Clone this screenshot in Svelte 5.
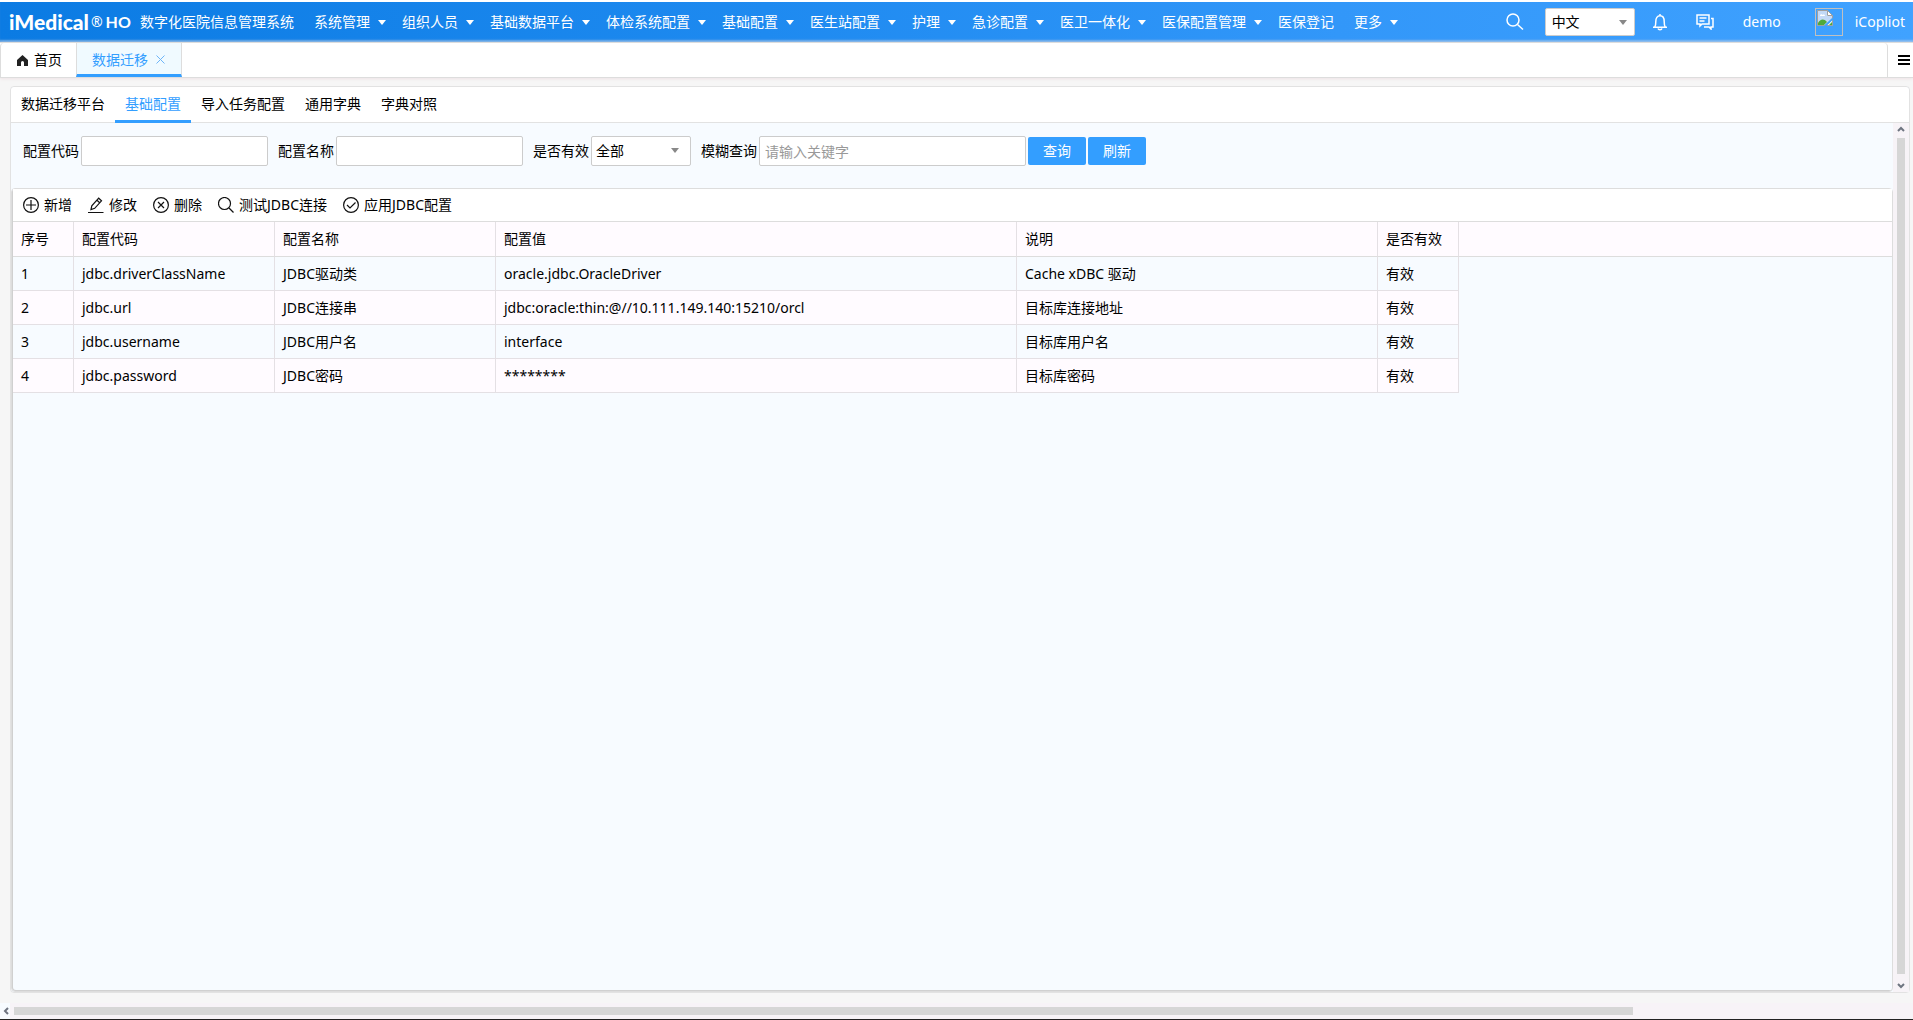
<script>
  const menus = [
    { label: '系统管理', children: true },
    { label: '组织人员', children: true },
    { label: '基础数据平台', children: true },
    { label: '体检系统配置', children: true },
    { label: '基础配置', children: true },
    { label: '医生站配置', children: true },
    { label: '护理', children: true },
    { label: '急诊配置', children: true },
    { label: '医卫一体化', children: true },
    { label: '医保配置管理', children: true },
    { label: '医保登记', children: false },
    { label: '更多', children: true }
  ];

  const tabs = ['数据迁移平台', '基础配置', '导入任务配置', '通用字典', '字典对照'];

  const tools = [
    { icon: 'add', label: '新增' },
    { icon: 'edit', label: '修改' },
    { icon: 'remove', label: '删除' },
    { icon: 'search', label: '测试JDBC连接' },
    { icon: 'apply', label: '应用JDBC配置' }
  ];

  const columns = ['序号', '配置代码', '配置名称', '配置值', '说明', '是否有效'];

  const allRows = [
    { code: 'jdbc.driverClassName', name: 'JDBC驱动类', value: 'oracle.jdbc.OracleDriver', desc: 'Cache xDBC 驱动', active: '有效' },
    { code: 'jdbc.url', name: 'JDBC连接串', value: 'jdbc:oracle:thin:@//10.111.149.140:15210/orcl', desc: '目标库连接地址', active: '有效' },
    { code: 'jdbc.username', name: 'JDBC用户名', value: 'interface', desc: '目标库用户名', active: '有效' },
    { code: 'jdbc.password', name: 'JDBC密码', value: '********', desc: '目标库密码', active: '有效' }
  ];

  let activeTab = $state('基础配置');
  let code = $state('');
  let name = $state('');
  let status = $state('全部');
  let keyword = $state('');
  let rows = $state(allRows);

  function query() {
    rows = allRows.filter(
      (r) =>
        r.code.includes(code) &&
        r.name.includes(name) &&
        (status === '全部' || r.active === status) &&
        Object.values(r).join(' ').includes(keyword)
    );
  }

  function refresh() {
    code = '';
    name = '';
    status = '全部';
    keyword = '';
    rows = allRows;
  }
</script>

<div class="page">
  <header>
    <div class="logo">iMedical<sup>®</sup><b>HO</b></div>
    <span class="system">数字化医院信息管理系统</span>
    <nav>
      {#each menus as menu}
        <a href="#menu" class:plain={!menu.children}>
          {menu.label}
          {#if menu.children}<i class="caret"></i>{/if}
        </a>
      {/each}
    </nav>
    <div class="user">
      <button class="search" aria-label="搜索">
        <svg width="18" height="18" viewBox="0 0 18 18">
          <circle cx="7" cy="7" r="6" />
          <path d="M11.5 11.5 17 16.5" />
        </svg>
      </button>
      <div class="select lang">
        <select aria-label="语言">
          <option>中文</option>
        </select>
      </div>
      <button class="bell" aria-label="通知">
        <svg width="16" height="18" viewBox="0 0 16 18">
          <path d="M1 14.200h14M2.800 14c.9-1.300 1-3.200 1-5.500C3.800 5 5.300 2.800 8 2.800s4.200 2.200 4.200 5.700c0 2.300.1 4.200 1 5.500M8 1v1.500M6 15.500c.5 1.700 3.500 1.700 4 0" />
        </svg>
      </button>
      <button class="chat" aria-label="消息">
        <svg width="18" height="16" viewBox="0 0 18 16">
          <path d="M1 1h12v9H6l-2 2v-2H1zM3.500 4h7M3.500 7h5M15 4.500h2V13h-2v2l-2-2H8" />
        </svg>
      </button>
      <span class="account">demo</span>
      <span class="avatar">
        <svg width="16" height="16" viewBox="0 0 16 16">
          <path d="M.5.5h10l5 5v10H.5z" fill="#fff" stroke="#a0a0a0" />
          <path d="M1 1h9v5h5v4L10 15H1z" fill="#c3d9f7" />
          <path d="M3 6c0-2 2-2 2.500-1C7 4 8 5 8 6z" fill="#fff" />
          <path d="M1 15v-2c2-4 6-5 9-1l-3 3z" fill="#4faa3c" />
          <path d="M12 15l3-3v3z" fill="#4faa3c" />
          <path d="M10.500.5v5h5z" fill="#fff" stroke="#a0a0a0" />
          <path d="M8 16 16 8.500" stroke="#40a2ff" stroke-width="2" />
        </svg>
      </span>
      <a href="#copilot">iCopliot</a>
    </div>
  </header>

  <div class="pages">
    <button class="home">
      <svg width="11" height="11" viewBox="0 0 11 11">
        <path d="M5.500 0 11 5v6H7V7.500a1.500 1.500 0 0 0-3 0V11H0V5z" fill="#222" />
      </svg>
      首页
    </button>
    <button class="current">
      数据迁移
      <svg width="9" height="9" viewBox="0 0 9 9"><path d="M.5.5l8 8M8.500.5l-8 8" stroke="#6db5f8" /></svg>
    </button>
    <span class="rest"></span>
    <button class="more" aria-label="页签菜单">
      <svg width="12" height="10" viewBox="0 0 12 10"><path d="M0 1h12M0 5h12M0 9h12" stroke="#000" stroke-width="2" /></svg>
    </button>
  </div>

  <main>
    <div class="tabs">
      {#each tabs as tab}
        <button class:active={tab === activeTab} onclick={() => (activeTab = tab)}>{tab}</button>
      {/each}
    </div>

    <div class="body">
      <div class="content">
        <div class="filters">
          <label for="code">配置代码</label>
          <input id="code" type="text" bind:value={code} />
          <label for="name">配置名称</label>
          <input id="name" type="text" bind:value={name} />
          <label for="status">是否有效</label>
          <div class="select status">
            <select id="status" bind:value={status}>
              <option>全部</option>
              <option>有效</option>
              <option>无效</option>
            </select>
          </div>
          <label for="keyword">模糊查询</label>
          <input id="keyword" class="wide" type="text" placeholder="请输入关键字" bind:value={keyword} />
          <button onclick={query}>查询</button>
          <button onclick={refresh}>刷新</button>
        </div>

        <section class="grid">
          <div class="toolbar">
            {#each tools as tool}
              <button>
                <svg width="16" height="16" viewBox="0 0 16 16">
                  {#if tool.icon === 'edit'}
                    <path d="M3 12.500 3.800 8.800 10.700 1.200 13.500 3.800 6.700 11.300zM9 3.200l2.700 2.500M0 15.500h15.500" />
                  {:else if tool.icon === 'search'}
                    <circle cx="6.500" cy="6.500" r="6" />
                    <path d="M11 11l4.500 4.500" />
                  {:else}
                    <circle cx="8" cy="8" r="7.400" />
                    {#if tool.icon === 'add'}<path d="M8 3v10M3 8h10" />{/if}
                    {#if tool.icon === 'remove'}<path d="M5 5l6 6M11 5l-6 6" />{/if}
                    {#if tool.icon === 'apply'}<path d="M4 8l3 3 5.500-5.500" />{/if}
                  {/if}
                </svg>
                {tool.label}
              </button>
            {/each}
          </div>
          <div class="head">
            <table>
              <colgroup>
                <col class="c1" /><col class="c2" /><col class="c3" /><col class="c4" /><col class="c5" /><col class="c6" />
              </colgroup>
              <thead>
                <tr>
                  {#each columns as column}
                    <th>{column}</th>
                  {/each}
                </tr>
              </thead>
              <tbody>
                {#each rows as row, i}
                  <tr>
                    <td>{i + 1}</td>
                    <td>{row.code}</td>
                    <td>{row.name}</td>
                    <td>{row.value}</td>
                    <td>{row.desc}</td>
                    <td>{row.active}</td>
                  </tr>
                {/each}
              </tbody>
            </table>
            <div class="filler"></div>
          </div>
        </section>
      </div>

      <div class="vbar">
        <svg width="8" height="6" viewBox="0 0 8 6"><path d="M1 5l3-3 3 3" /></svg>
        <span></span>
        <svg width="8" height="6" viewBox="0 0 8 6"><path d="M1 1l3 3 3-3" /></svg>
      </div>
    </div>
  </main>

  <div class="hbar">
    <div class="arrow"><svg width="6" height="8" viewBox="0 0 6 8"><path d="M5 1 2 4l3 3" /></svg></div>
    <div class="track"><span></span></div>
  </div>
</div>

<style>
  :global(body) {
    background: #f6f6f6;
  }

  .page {
    display: flex;
    flex-direction: column;
    box-sizing: border-box;
    min-height: 100vh;
    border-top: 2px solid #fff;
    border-bottom: 1px solid #222;
    font-family: "Noto Sans", "Noto Sans CJK SC", sans-serif;
    font-size: 14px;
    line-height: 20px;
    color: #000;
  }

  button,
  input,
  select {
    box-sizing: border-box;
    font: inherit;
    color: inherit;
  }

  button {
    padding: 0;
    border: 0;
    background: none;
    cursor: pointer;
    white-space: nowrap;
  }

  a {
    color: inherit;
    text-decoration: none;
  }

  svg {
    display: block;
    flex: none;
    fill: none;
  }

  header {
    display: flex;
    align-items: center;
    height: 40px;
    padding: 0 8px 0 9px;
    background: linear-gradient(to right, #0b7be3, #1e8af0 40%, #3297f9 70%, #40a2ff);
    box-shadow: inset 0 -3px 2px -1px rgba(190, 205, 225, 0.5);
    color: #fff;
    white-space: nowrap;
  }

  .logo {
    display: flex;
    align-items: center;
    width: 131px;
    font: 900 21px/36px Lato, sans-serif;
  }

  .logo sup {
    margin: 0 3px 0 2px;
    font: 14px/30px "Noto Sans", sans-serif;
  }

  .logo b {
    font-size: 16px;
    font-weight: 700;
  }

  .system {
    margin-right: 20px;
  }

  nav {
    display: flex;
    flex: 1;
    gap: 16px;
  }

  nav a {
    display: flex;
    align-items: center;
    gap: 8px;
  }

  nav .plain {
    margin-right: 4px;
  }

  .caret {
    border: 4px solid transparent;
    border-top: 5px solid #fff;
    border-bottom: 0;
  }

  .user {
    display: flex;
    align-items: center;
  }

  header svg {
    stroke: #fff;
    stroke-width: 1.5;
  }

  .avatar svg {
    stroke: none;
    stroke-width: 1;
  }

  .select {
    position: relative;
  }

  .select::after {
    content: "";
    position: absolute;
    top: 12px;
    right: 12px;
    border: 4px solid transparent;
    border-top: 5px solid #888;
    border-bottom: 0;
    pointer-events: none;
  }

  .lang::after {
    right: 8px;
  }

  select {
    display: block;
    width: 100%;
    height: 100%;
    padding: 0 4px;
    border: 1px solid #ccc;
    border-radius: 2px;
    background: #fff;
    color: #000;
    appearance: none;
  }

  .lang {
    width: 90px;
    height: 28px;
    margin: 0 17px 0 21px;
  }

  .lang select {
    padding: 0 6px;
  }

  .chat {
    margin: 0 29px 0 28px;
  }

  .avatar {
    box-sizing: border-box;
    width: 28px;
    height: 28px;
    margin: 0 12px 0 34px;
    padding: 1px;
    border: 1px solid #c0c0c0;
  }

  .pages {
    display: flex;
    height: 34px;
    border-top: 1px solid #ddd;
    border-bottom: 1px solid #ddd;
    background: #fff;
    box-shadow: 0 1px 3px #eee3e5;
  }

  .pages button {
    display: flex;
    align-items: center;
  }

  .pages .home {
    gap: 6px;
    padding: 0 14px 0 16px;
    border-left: 1px solid #ddd;
    border-top-left-radius: 4px;
  }

  .pages .current {
    gap: 8px;
    padding: 2px 16px 0 15px;
    border-left: 1px solid #ddd;
    border-right: 1px solid #ddd;
    border-bottom: 3px solid #339eff;
    background: #f0faff;
    color: #339eff;
  }

  .rest {
    flex: 1;
    border-right: 1px solid #ddd;
    border-top-right-radius: 4px;
  }

  .pages .more {
    padding: 0 3px 0 10px;
  }

  main {
    display: flex;
    flex: 1;
    flex-direction: column;
    margin: 8px 3px 10px 10px;
    border: 1px solid #e2e2e2;
    border-radius: 4px;
    background: #f7fbff;
  }

  .tabs {
    display: flex;
    height: 35px;
    border-bottom: 1px solid #e2e2e2;
    border-radius: 4px 4px 0 0;
    background: #fff;
  }

  .tabs button {
    height: 36px;
    padding: 1px 10px 0;
    border-bottom: 3px solid transparent;
  }

  .tabs button.active {
    border-color: #339eff;
    color: #339eff;
  }

  .body {
    display: flex;
    flex: 1;
  }

  .content {
    display: flex;
    flex: 1;
    flex-direction: column;
  }

  .filters {
    display: flex;
    align-items: center;
    gap: 2px;
    height: 56px;
    padding: 0 12px 9px;
  }

  .filters input {
    width: 187px;
    height: 30px;
    margin-right: 8px;
    padding: 0 5px;
    border: 1px solid #ccc;
    border-radius: 2px;
    background: #fff;
  }

  .filters .wide {
    width: 267px;
    margin-right: 0;
  }

  .filters input::placeholder {
    color: #999;
  }

  .status {
    width: 100px;
    height: 30px;
    margin-right: 8px;
  }

  .filters button {
    width: 58px;
    height: 28px;
    border-radius: 2px;
    background: #339eff;
    color: #fff;
  }

  .grid {
    flex: 1;
    border: 1px solid #ddd;
    border-radius: 4px;
    box-shadow: inset 1px -1px 0 #d0d0d0;
    padding-left: 1px;
  }

  .toolbar {
    display: flex;
    gap: 16px;
    height: 32px;
    padding-left: 10px;
    border-bottom: 1px solid #ddd;
    background: #fff;
  }

  .toolbar button {
    display: flex;
    align-items: center;
    gap: 5px;
  }

  .toolbar svg {
    stroke: #111;
    stroke-width: 1.2;
  }

  .head {
    display: flex;
  }

  .filler {
    flex: 1;
    height: 34px;
    border-bottom: 1px solid #ddd;
    background: #fffbff;
  }

  table {
    width: 1446px;
    table-layout: fixed;
    border-spacing: 0;
  }

  .c1 {
    width: 61px;
  }

  .c2 {
    width: 201px;
  }

  .c3 {
    width: 221px;
  }

  .c4 {
    width: 521px;
  }

  .c5 {
    width: 361px;
  }

  .c6 {
    width: 81px;
  }

  th,
  td {
    box-sizing: border-box;
    height: 34px;
    padding: 0 8px;
    border-right: 1px solid #e4e0e4;
    border-bottom: 1px solid #e4e0e4;
    font-weight: 400;
    text-align: left;
    white-space: nowrap;
  }

  th {
    height: 35px;
    border-bottom-color: #ddd;
    background: #fffbff;
  }

  tbody tr:nth-child(even) {
    background: #fffbff;
  }

  .vbar {
    display: flex;
    flex-direction: column;
    align-items: center;
    gap: 6px;
    width: 16px;
    padding: 3px 0;
    background: #f7f3f7;
  }

  .vbar span {
    flex: 1;
    width: 8px;
    margin-bottom: 3px;
    background: #d6d6d6;
  }

  .vbar svg,
  .hbar svg {
    stroke: #6e7480;
    stroke-width: 2;
  }

  .hbar {
    display: flex;
    height: 16px;
    background: #f7f3f7;
  }

  .arrow {
    display: flex;
    align-items: center;
    width: 7px;
    padding-left: 3px;
    background: #f7fbff;
  }

  .track {
    display: flex;
    flex: 1;
    padding: 4px;
  }

  .track span {
    flex: 41;
    background: #d6d6d6;
  }

  .track::after {
    content: "";
    flex: 7;
  }
</style>
